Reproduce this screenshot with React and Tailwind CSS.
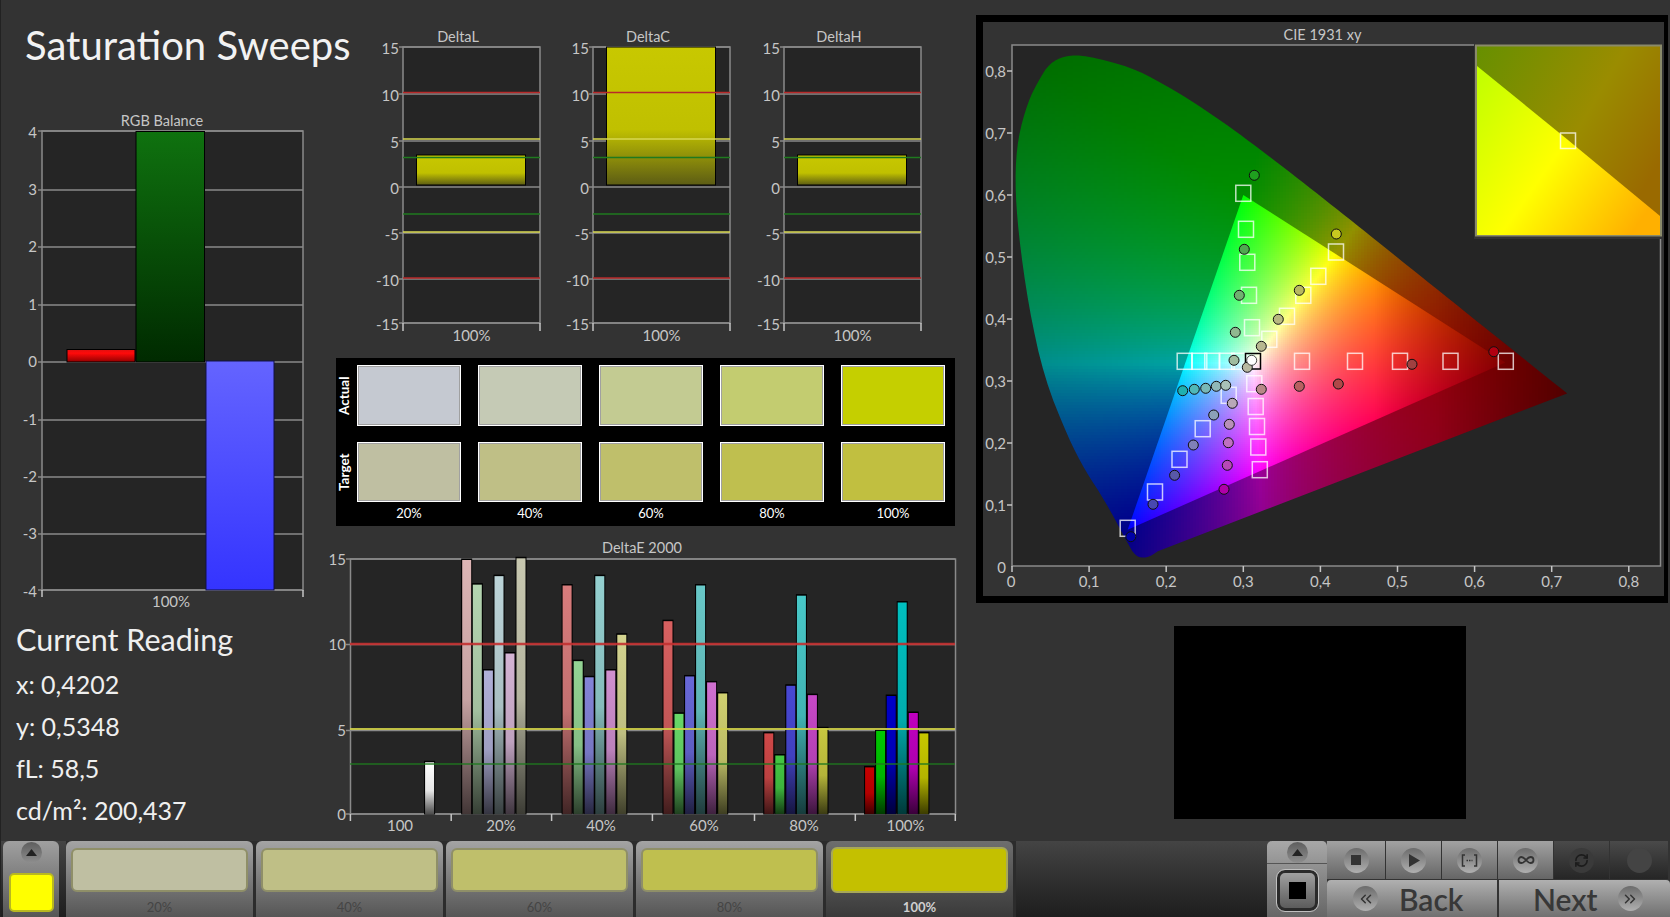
import { ChevronsLeft, ChevronsRight, Infinity as InfinityIcon, RefreshCw } from "lucide-react";

const GRID = "#8a8a8a";

// CIE helpers: page pixels <-> xy
const toX = (v) => 1011 + 771 * v;
const toY = (v) => 567 - 620 * v;

function smooth(list, rounds) {
  let out = list;
  for (let n = 0; n < rounds; n++) {
    const next = [out[0]];
    for (let i = 0; i < out.length - 1; i++) {
      const [ax, ay] = out[i];
      const [bx, by] = out[i + 1];
      next.push([ax * 0.75 + bx * 0.25, ay * 0.75 + by * 0.25], [ax * 0.25 + bx * 0.75, ay * 0.25 + by * 0.75]);
    }
    next.push(out[out.length - 1]);
    out = next;
  }
  return out;
}

const LOCUS = smooth(
  [
    [0.19, 0.026], [0.175, 0.014], [0.16, 0.017], [0.149, 0.041], [0.12, 0.108], [0.095, 0.155], [0.073, 0.208],
    [0.0418, 0.305], [0.0215, 0.42], [0.0082, 0.5384], [0.0037, 0.623], [0.0073, 0.691], [0.0208, 0.751],
    [0.0346, 0.785], [0.0484, 0.812], [0.0691, 0.825], [0.0967, 0.825], [0.1547, 0.8059],
    [0.1929, 0.7816], [0.2296, 0.7543], [0.2658, 0.7243], [0.3016, 0.6923], [0.3373, 0.6589], [0.3731, 0.6245],
    [0.4087, 0.5896], [0.4441, 0.5547], [0.4788, 0.5202], [0.5125, 0.4866], [0.5448, 0.4544], [0.5752, 0.4242],
    [0.6029, 0.3965], [0.627, 0.3725], [0.6658, 0.334], [0.6915, 0.3083], [0.72, 0.28],
  ],
  2
);
const GAMUT = [[0.64, 0.33], [0.3, 0.6], [0.15, 0.06]];

const toPoints = (list) => list.map(([x, y]) => `${toX(x)},${toY(y)}`).join(" ");

function inside(poly, x, y) {
  let hit = false;
  for (let i = 0, j = poly.length - 1; i < poly.length; j = i++) {
    const [xi, yi] = poly[i];
    const [xj, yj] = poly[j];
    if (yi > y !== yj > y && x < ((xj - xi) * (y - yi)) / (yj - yi) + xi) hit = !hit;
  }
  return hit;
}

function xyColor(x, y, dim) {
  const X = x / y;
  const Z = (1 - x - y) / y;
  let r = Math.max(0, 3.2406 * X - 1.5372 - 0.4986 * Z);
  let g = Math.max(0, -0.9689 * X + 1.8758 + 0.0415 * Z);
  let b = Math.max(0, 0.0557 * X - 0.204 + 1.057 * Z);
  const m = Math.max(r, g, b);
  const gamma = dim ? 1 : 1 / 1.15;
  r = Math.pow(r / m, gamma);
  g = Math.pow(g / m, gamma);
  b = Math.pow(b / m, gamma);
  let f = 1 - 0.5 * Math.min(1, Math.max(0, (x - 0.47) / 0.17));
  if (dim) {
    const d = Math.hypot(x - 0.3127, y - 0.329);
    f = (0.68 - 0.45 * d) * (1 - 0.35 * Math.min(1, Math.max(0, (x - 0.55) / 0.17)));
  }
  return `rgb(${Math.round(r * f * 255)},${Math.round(g * f * 255)},${Math.round(b * f * 255)})`;
}

function buildCells(poly, step, dim) {
  const cells = [];
  for (let py = 54; py < 566; py += step) {
    for (let px = 1012; px < 1572; px += step) {
      const corners = [[px, py], [px + step, py], [px, py + step], [px + step, py + step]].map(([a, b]) => [
        (a - 1011) / 771,
        (567 - b) / 620,
      ]);
      const hits = corners.filter(([a, b]) => inside(poly, a, b)).length;
      if (!hits) continue;
      if (dim && corners.every(([a, b]) => inside(GAMUT, a, b))) continue;
      const cx = (px + step / 2 - 1011) / 771;
      const cy = (567 - py - step / 2) / 620;
      cells.push([px, py, xyColor(cx, Math.max(cy, 0.005), dim)]);
    }
  }
  return cells;
}

const dimCells = buildCells(LOCUS, 3, true);
const brightCells = buildCells(GAMUT, 2, false);

const SQUARES = [
  [1242.3, 193.3], [1245, 229.3], [1246.3, 262.3], [1248, 295.3], [1251, 327.7], [1268.3, 339.3], [1286, 316.3],
  [1302.3, 295.3], [1317.3, 276.3], [1335, 252], [1183.7, 361.3], [1198.3, 361.3], [1211.3, 361.3], [1225.7, 361.3],
  [1238.3, 361.3], [1301, 361.3], [1354, 361.3], [1399, 361.3], [1449.5, 361.3], [1504.8, 361.3], [1253.3, 383.7],
  [1227.7, 395.3], [1254.7, 406.5], [1256, 426.5], [1257.3, 447], [1258.8, 469.7], [1201.7, 428.7], [1178.5, 459.3],
  [1154, 492], [1126.7, 528.3],
];

const DOTS = [
  [1253.3, 175.3, "#1fa01f"], [1335.3, 234, "#c8c820"], [1243.3, 249.3, "#50a850"], [1298.3, 290.3, "#b8b860"],
  [1238.3, 295.3, "#70b070"], [1277.3, 319.3, "#b8b880"], [1234.3, 332.3, "#90b890"], [1260.3, 346.3, "#b8b890"],
  [1233, 360.3, "#a0bca0"], [1246.3, 367.3, "#b8b8a0"], [1181.7, 390.7, "#20b0b0"], [1193.3, 389.3, "#50b8b8"],
  [1204.7, 388.3, "#78b8b8"], [1215.3, 386.3, "#90b8b8"], [1224.7, 385.3, "#a8c0b8"], [1260.3, 389.3, "#b88888"],
  [1298.3, 386.3, "#b86060"], [1337.3, 384, "#b04848"], [1231.3, 403.3, "#b8a8b8"], [1212.7, 415, "#8ca0b8"],
  [1228.3, 424.3, "#b890b8"], [1192.3, 445, "#8080b8"], [1227.3, 442.7, "#c070c0"], [1173.6, 475.3, "#5858a8"],
  [1226.3, 465.3, "#b848b8"], [1152, 504.3, "#4848b0"], [1223, 489.3, "#b000a8"], [1129.8, 536.7, "#0000a8"],
  [1411, 364.3, "#a04040"], [1492.8, 351.7, "#b00010"],
];

const DELTA_E = [
  { x: [429.6], v: [3.1], c: ["#ffffff"] },
  {
    x: [466.7, 477.3, 488.4, 499, 510, 521],
    v: [15, 13.55, 8.5, 14.05, 9.5, 15.1],
    c: ["#dcb4b4", "#b4d4b0", "#b0b0d8", "#bcd4d8", "#d4b4d4", "#c8c8b0"],
  },
  {
    x: [567.1, 578.2, 589.2, 599.8, 610.8, 621.8],
    v: [13.5, 9.05, 8.1, 14.05, 8.5, 10.6],
    c: ["#d87c7c", "#94d494", "#8484d8", "#94d0d0", "#d090d0", "#d4d490"],
  },
  {
    x: [668, 679, 689.6, 700.6, 711.6, 722.7],
    v: [11.4, 5.95, 8.15, 13.5, 7.8, 7.15],
    c: ["#d86060", "#68d868", "#6868d8", "#68c8c8", "#d070d0", "#d0d070"],
  },
  {
    x: [768.8, 779.8, 790.8, 801.4, 812.4, 823],
    v: [4.8, 3.5, 7.6, 12.9, 7.05, 5.1],
    c: ["#d04848", "#44c844", "#4848d4", "#48c8c8", "#c848c8", "#c8c840"],
  },
  {
    x: [869.6, 880.6, 891.2, 902.2, 913.3, 923.9],
    v: [2.8, 4.95, 7, 12.5, 6, 4.8],
    c: ["#c80000", "#00c800", "#0000c8", "#00c0c0", "#c000c0", "#c8c800"],
  },
];

const SWATCH_ACTUAL = ["#c5c9d1", "#c5cab5", "#c3cb92", "#c3cc70", "#c5cf00"];
const SWATCH_TARGET = ["#bfbfa2", "#bfbf86", "#bfbf6b", "#bfbf4f", "#c1bf40"];
const PERCENTS = ["20%", "40%", "60%", "80%", "100%"];
const STRIP = ["#bfbfa2", "#bfbf86", "#bfbf6b", "#bfbf4f"];

function AxisLabel({ x, y, children, anchor = "end" }) {
  return (
    <text x={x} y={y} textAnchor={anchor} dominantBaseline="middle" className="text-[15px] fill-[#c6c6c6]">
      {children}
    </text>
  );
}

function RgbChart() {
  const rows = [
    [131, "4", 3], [190, "3", 1], [247, "2", 1], [305, "1", 1], [362, "0", 1], [420, "-1", 1], [477, "-2", 1], [534, "-3", 1], [590, "-4", 3],
  ];
  return (
    <svg width="336" height="500" viewBox="0 112 336 500" className="block">
      <defs>
        <linearGradient id="rgbRed" x1="0" y1="0" x2="0" y2="1">
          <stop offset="0" stopColor="#e01010" />
          <stop offset="0.3" stopColor="#ff0a0a" />
          <stop offset="1" stopColor="#900000" />
        </linearGradient>
        <linearGradient id="rgbGreen" x1="0" y1="0" x2="0" y2="1">
          <stop offset="0" stopColor="#0f720f" />
          <stop offset="1" stopColor="#002a00" />
        </linearGradient>
        <linearGradient id="rgbBlue" x1="0" y1="0" x2="0" y2="1">
          <stop offset="0" stopColor="#6464ff" />
          <stop offset="1" stopColor="#3434ff" />
        </linearGradient>
      </defs>
      <text x="161" y="122" textAnchor="middle" dominantBaseline="middle" className="text-[14.5px] fill-[#c6c6c6]">
        RGB Balance
      </text>
      <rect x="41" y="131" width="261" height="459" fill="#252525" stroke={GRID} strokeWidth="1.5" />
      {rows.map(([y, label, nudge]) => (
        <g key={label}>
          <line x1="37" x2="302" y1={y} y2={y} stroke={GRID} strokeWidth="1.5" />
          <AxisLabel x="36" y={y + nudge}>{label}</AxisLabel>
        </g>
      ))}
      <line x1="41" x2="41" y1="590" y2="597" stroke="#c6c6c6" strokeWidth="1.5" />
      <line x1="302" x2="302" y1="590" y2="597" stroke="#c6c6c6" strokeWidth="1.5" />
      <rect x="66" y="349.5" width="68" height="12.5" fill="url(#rgbRed)" stroke="#000" />
      <rect x="135" y="131.5" width="68.5" height="230.5" fill="url(#rgbGreen)" stroke="#000" />
      <rect x="205" y="361" width="68" height="229" fill="url(#rgbBlue)" stroke="#10104a" />
      <AxisLabel x="170" y="603" anchor="middle">100%</AxisLabel>
    </svg>
  );
}

function DeltaChart({ id, title, barTop, width }) {
  const rows = [[47, "15"], [94, "10"], [141, "5"], [187, "0"], [233, "-5"], [279, "-10"], [323, "-15"]];
  return (
    <svg width={width} height="330" viewBox={`0 22 ${width} 330`} className="block shrink-0">
      <defs>
        <linearGradient id={id} x1="0" y1="0" x2="0" y2="1">
          <stop offset="0" stopColor="#c8c800" />
          <stop offset="0.6" stopColor="#c0c000" />
          <stop offset="1" stopColor="#5c5c14" />
        </linearGradient>
      </defs>
      <text x="95" y="38" textAnchor="middle" dominantBaseline="middle" className="text-[14.5px] fill-[#c6c6c6]">
        {title}
      </text>
      <rect x="40" y="47" width="137" height="276" fill="#252525" stroke={GRID} strokeWidth="1.5" />
      {rows.map(([y, label]) => (
        <g key={label}>
          <line x1="36" x2="177" y1={y} y2={y} stroke={GRID} strokeWidth="1.5" />
          <AxisLabel x="36" y={y + 3}>{label}</AxisLabel>
        </g>
      ))}
      <line x1="40" x2="40" y1="323" y2="331" stroke="#c6c6c6" strokeWidth="1.5" />
      <line x1="177" x2="177" y1="323" y2="331" stroke="#c6c6c6" strokeWidth="1.5" />
      <rect x="53.5" y={barTop} width="109" height={185 - barTop} fill={`url(#${id})`} stroke="#000" />
      <line x1="40" x2="177" y1="92.5" y2="92.5" stroke="#b82a2a" strokeWidth="1.5" />
      <line x1="40" x2="177" y1="139" y2="139" stroke="#d8d850" strokeWidth="1.5" />
      <line x1="40" x2="177" y1="157.5" y2="157.5" stroke="#1f7a1f" strokeWidth="1.5" />
      <line x1="40" x2="177" y1="214" y2="214" stroke="#1f7a1f" strokeWidth="1.5" />
      <line x1="40" x2="177" y1="232" y2="232" stroke="#d8d850" strokeWidth="1.5" />
      <line x1="40" x2="177" y1="278" y2="278" stroke="#b82a2a" strokeWidth="1.5" />
      <AxisLabel x="108.5" y="337" anchor="middle">100%</AxisLabel>
    </svg>
  );
}

function Swatch({ color }) {
  return (
    <div className="w-[104px] h-full border border-white">
      <div className="w-full h-full border border-[#a0a0a0]" style={{ backgroundColor: color }} />
    </div>
  );
}

function SwatchPanel() {
  return (
    <div className="w-[619px] h-[168px] bg-black flex flex-col pt-[7px]">
      <div className="flex h-[61px]">
        <span className="w-[16px] mr-[5px] [writing-mode:vertical-rl] rotate-180 text-center font-bold text-[13.5px] leading-[16px] text-white">Actual</span>
        <div className="flex gap-[17px]">
          {SWATCH_ACTUAL.map((c) => <Swatch key={c} color={c} />)}
        </div>
      </div>
      <div className="flex h-[60px] mt-[16px]">
        <span className="w-[16px] mr-[5px] [writing-mode:vertical-rl] rotate-180 text-center font-bold text-[13.5px] leading-[16px] text-white">Target</span>
        <div className="flex gap-[17px]">
          {SWATCH_TARGET.map((c) => <Swatch key={c} color={c} />)}
        </div>
      </div>
      <div className="flex gap-[17px] pl-[21px] mt-[3px]">
        {PERCENTS.map((p) => (
          <span key={p} className="w-[104px] text-center text-[13px] leading-[16px] text-white">{p}</span>
        ))}
      </div>
    </div>
  );
}

function DeltaEChart() {
  const ticks = [350.4, 451.2, 551.6, 652.4, 754.5, 855.3, 955.3];
  const names = [[400, "100"], [501, "20%"], [601, "40%"], [704, "60%"], [804, "80%"], [905.5, "100%"]];
  const rows = [[559, "15"], [644.5, "10"], [730.5, "5"], [814, "0"]];
  return (
    <svg width="639" height="306" viewBox="336 535 639 306" className="block overflow-visible">
      <defs>
        {DELTA_E.flatMap((group, g) =>
          group.c.map((color, i) => (
            <linearGradient key={`${g}-${i}`} id={`de${g}-${i}`} x1="0" y1="0" x2="0" y2="1">
              <stop offset="0" stopColor={color} />
              <stop offset="0.55" stopColor={color} stopOpacity="0.9" />
              <stop offset="1" stopColor={color} stopOpacity="0.3" />
            </linearGradient>
          ))
        )}
      </defs>
      <text x="642" y="549" textAnchor="middle" dominantBaseline="middle" className="text-[14.5px] fill-[#c6c6c6]">
        DeltaE 2000
      </text>
      <rect x="350.5" y="559" width="605" height="255" fill="#252525" stroke={GRID} strokeWidth="1.5" />
      {rows.map(([y, label]) => (
        <g key={label}>
          <line x1="346" x2="955" y1={y} y2={y} stroke={GRID} strokeWidth="1.5" />
          <AxisLabel x="346" y={y + 2}>{label}</AxisLabel>
        </g>
      ))}
      {ticks.map((x) => (
        <line key={x} x1={x} x2={x} y1="814" y2="821" stroke="#c6c6c6" strokeWidth="1.5" />
      ))}
      {DELTA_E.flatMap((group, g) =>
        group.x.map((x, i) => (
          <g key={`${g}-${i}`}>
            <rect x={x - 5} y={814 - group.v[i] * 17} width="10" height={group.v[i] * 17} fill="#000" stroke="#000" />
            <rect x={x - 4.5} y={814 - group.v[i] * 17 + 1} width="9" height={group.v[i] * 17 - 1} fill={`url(#de${g}-${i})`} />
          </g>
        ))
      )}
      <line x1="350" x2="955" y1="644" y2="644" stroke="#c43030" strokeWidth="2.5" opacity="0.9" />
      <line x1="350" x2="955" y1="729" y2="729" stroke="#d0d048" strokeWidth="2" opacity="0.9" />
      <line x1="350" x2="955" y1="764" y2="764" stroke="#1f7a1f" strokeWidth="1.5" opacity="0.9" />
      {names.map(([x, label]) => (
        <AxisLabel key={label} x={x} y="827" anchor="middle">{label}</AxisLabel>
      ))}
    </svg>
  );
}

function CieChart() {
  const yLabels = [0.8, 0.7, 0.6, 0.5, 0.4, 0.3, 0.2, 0.1];
  const xLabels = [0.1, 0.2, 0.3, 0.4, 0.5, 0.6, 0.7, 0.8];
  return (
    <svg width="681" height="574" viewBox="982 22 681 574" className="block">
      <defs>
        <clipPath id="locusClip">
          <polygon points={toPoints(LOCUS)} />
        </clipPath>
        <clipPath id="gamutClip">
          <polygon points={toPoints(GAMUT)} />
        </clipPath>
        <linearGradient id="insetDim" x1="0" y1="0" x2="1" y2="0.6">
          <stop offset="0" stopColor="#669000" />
          <stop offset="0.6" stopColor="#9a8c00" />
          <stop offset="1" stopColor="#9a6a00" />
        </linearGradient>
        <linearGradient id="insetBright" x1="0" y1="0.1" x2="1" y2="0.75">
          <stop offset="0" stopColor="#c4ff00" />
          <stop offset="0.5" stopColor="#ffff00" />
          <stop offset="1" stopColor="#ffb000" />
        </linearGradient>
      </defs>
      <text x="1321.5" y="36" textAnchor="middle" dominantBaseline="middle" className="text-[14.5px] fill-[#c6c6c6]">
        CIE 1931 xy
      </text>
      <rect x="1011" y="45" width="648.5" height="521" fill="#252525" stroke={GRID} strokeWidth="1.5" />
      {yLabels.map((v) => (
        <g key={v}>
          <line x1="1006" x2="1011" y1={toY(v)} y2={toY(v)} stroke="#c6c6c6" strokeWidth="1.5" />
          <AxisLabel x="1005" y={toY(v) + 2}>{String(v).replace(".", ",")}</AxisLabel>
        </g>
      ))}
      <AxisLabel x="1005" y="569">0</AxisLabel>
      <line x1="1011" x2="1011" y1="566" y2="572" stroke="#c6c6c6" strokeWidth="1.5" />
      <AxisLabel x="1010" y="583" anchor="middle">0</AxisLabel>
      {xLabels.map((v) => (
        <g key={v}>
          <line x1={toX(v)} x2={toX(v)} y1="566" y2="572" stroke="#c6c6c6" strokeWidth="1.5" />
          <AxisLabel x={toX(v)} y="583" anchor="middle">{String(v).replace(".", ",")}</AxisLabel>
        </g>
      ))}
      <g clipPath="url(#locusClip)" shapeRendering="crispEdges">
        {dimCells.map(([x, y, c]) => (
          <rect key={`${x}-${y}`} x={x} y={y} width="3" height="3" fill={c} />
        ))}
      </g>
      <g clipPath="url(#gamutClip)" shapeRendering="crispEdges">
        {brightCells.map(([x, y, c]) => (
          <rect key={`${x}-${y}`} x={x} y={y} width="2" height="2" fill={c} />
        ))}
      </g>
      {SQUARES.map(([x, y]) => (
        <rect key={`${x}-${y}`} x={x - 7.5} y={y - 8} width="15" height="16" fill="none" stroke="#fff" strokeOpacity="0.75" strokeWidth="1.5" />
      ))}
      <rect x="1244.5" y="353.5" width="15" height="15.5" fill="none" stroke="#000" strokeWidth="1.5" />
      {DOTS.map(([x, y, c]) => (
        <circle key={`${x}-${y}`} cx={x} cy={y} r="5" fill={c} stroke="#101010" strokeWidth="1" />
      ))}
      <circle cx="1250.7" cy="360.3" r="5" fill="#fff" stroke="#101010" strokeWidth="0.75" />
      <rect x="1473" y="43" width="190" height="196" fill="#333" />
      <rect x="1475" y="45.5" width="185" height="190" fill="url(#insetDim)" stroke="#8a8a6a" strokeWidth="2" />
      <polygon points="1476,66 1567,140 1659,216 1659,235 1476,235" fill="url(#insetBright)" />
      <rect x="1559.5" y="133" width="15" height="15.5" fill="none" stroke="#fff" strokeOpacity="0.75" strokeWidth="1.5" />
    </svg>
  );
}

function UpButton() {
  return (
    <span className="w-[21px] h-[21px] rounded-full bg-linear-to-b from-[#5e5e5e] to-[#8e8e8e] flex items-center justify-center">
      <svg width="11" height="7" viewBox="0 0 11 7"><path d="M5.5 0L11 7H0z" fill="#222" /></svg>
    </span>
  );
}

function StripButton({ color, label, active }) {
  return (
    <div
      className={
        active
          ? "w-[187px] h-full rounded-t-[6px] bg-linear-to-b from-[#6e6e6e] via-[#545454] to-[#3a3a3a] flex flex-col items-center pt-[6px]"
          : "w-[187px] h-full rounded-t-[6px] bg-linear-to-b from-[#a4a4a4] via-[#7c7c7c] to-[#565656] flex flex-col items-center pt-[7px]"
      }
    >
      <div
        className={
          active
            ? "w-[177px] h-[46px] rounded-[6px] border-2 border-[#a8a858]"
            : "w-[177px] h-[45px] rounded-[6px] border-2 border-[#8f8f68]"
        }
        style={{ backgroundColor: color }}
      />
      <span className={active ? "mt-[5px] text-[13px] font-bold text-[#d0d0d0]" : "mt-[6px] text-[13px] text-[#454545]"}>
        {label}
      </span>
    </div>
  );
}

function RoundIcon({ children }) {
  return (
    <span className="w-[25px] h-[25px] rounded-full bg-linear-to-b from-[#6c6c6c] to-[#b0b0b0] flex items-center justify-center text-[#333]">
      {children}
    </span>
  );
}

function ToolCell({ children, width, dark }) {
  return (
    <div
      className={
        dark
          ? "h-full flex items-center justify-center bg-linear-to-b from-[#4a4a4a] to-[#262626]"
          : "h-full flex items-center justify-center bg-linear-to-b from-[#a2a2a2] to-[#666666]"
      }
      style={{ width }}
    >
      {children}
    </div>
  );
}

function Toolbar() {
  return (
    <div className="h-[76px] flex bg-linear-to-b from-[#444444] to-[#1e1e1e]">
      <div className="ml-[2px] w-[56px] h-full rounded-t-[6px] bg-linear-to-b from-[#a0a0a0] via-[#7c7c7c] to-[#565656] flex flex-col items-center pt-[1px]">
        <UpButton />
        <div className="mt-[10px] w-[45px] h-[39px] rounded-[5px] bg-[#ffff00] border-2 border-[#b8b820]" />
      </div>
      <div className="ml-[7px] flex gap-[3px] bg-[#2c2c2c] pr-[3px]">
        {STRIP.map((c, i) => <StripButton key={c} color={c} label={PERCENTS[i]} />)}
        <StripButton color="#c4c000" label="100%" active />
      </div>

      <div className="ml-auto w-[60px] h-full rounded-t-[5px] flex flex-col bg-linear-to-b from-[#a8a8a8] to-[#666666]">
        <div className="h-[23px] flex items-center justify-center border-b border-[#555]"><UpButton /></div>
        <div className="flex-1 flex items-center justify-center">
          <div className="w-[41px] h-[41px] rounded-[8px] border-[3px] border-[#2a2a2a] outline outline-[#c0c0c0] flex items-center justify-center bg-linear-to-b from-[#a0a0a0] to-[#5c5c5c]">
            <span className="w-[17px] h-[17px] bg-black" />
          </div>
        </div>
      </div>

      <div className="w-[343px] flex flex-col">
        <div className="h-[38px] flex gap-[1px] bg-[#333]">
          <ToolCell width="58px"><RoundIcon><span className="w-[10px] h-[10px] bg-[#333]" /></RoundIcon></ToolCell>
          <ToolCell width="55px">
            <RoundIcon><svg width="12" height="13" viewBox="0 0 12 13"><path d="M1 0l11 6.5L1 13z" fill="#333" /></svg></RoundIcon>
          </ToolCell>
          <ToolCell width="55px">
            <RoundIcon>
              <svg width="17" height="13" viewBox="0 0 17 13" fill="none" stroke="#333" strokeWidth="1.5">
                <path d="M4 1H1.5v11H4M13 1h2.5v11H13" />
                <path d="M5.5 6.5h6" strokeDasharray="1.5 1" />
              </svg>
            </RoundIcon>
          </ToolCell>
          <ToolCell width="55px"><RoundIcon><InfinityIcon size={18} strokeWidth={2.4} /></RoundIcon></ToolCell>
          <ToolCell width="55px" dark>
            <span className="w-[25px] h-[25px] rounded-full bg-[#3a3a3a] flex items-center justify-center text-[#1c1c1c]">
              <RefreshCw size={15} strokeWidth={2.6} />
            </span>
          </ToolCell>
          <ToolCell width="58px" dark><span className="w-[25px] h-[25px] rounded-full bg-[#444]" /></ToolCell>
        </div>
        <div className="flex-1 flex gap-[2px] bg-[#333] pt-[1px]">
          <div className="w-[170px] flex items-center rounded-tl-[4px] bg-linear-to-b from-[#b0b0b0] to-[#707070] pl-[26px] gap-[21px]">
            <RoundIcon><ChevronsLeft size={18} strokeWidth={2} /></RoundIcon>
            <span className="text-[30px] leading-[32px] font-semibold text-[#383838]">Back</span>
          </div>
          <div className="flex-1 flex items-center rounded-tr-[4px] bg-linear-to-b from-[#b0b0b0] to-[#707070] pl-[34px] gap-[20px]">
            <span className="text-[30px] leading-[32px] font-semibold text-[#383838]">Next</span>
            <RoundIcon><ChevronsRight size={18} strokeWidth={2} /></RoundIcon>
          </div>
        </div>
      </div>
    </div>
  );
}

export default function App() {
  return (
    <div className="w-[1670px] h-[917px] overflow-hidden flex flex-col bg-[#333333] border-l border-[#222] font-['Lato',sans-serif]">
      <div className="h-[841px] flex">
        <div className="w-[335px] shrink-0 flex flex-col">
          <h1 className="h-[112px] pt-[20px] pl-[24px] text-[40px] leading-[50px] font-normal whitespace-nowrap text-[#f2f2f2]">Saturation Sweeps</h1>
          <RgbChart />
          <div className="pl-[15px] pt-[9px] flex flex-col text-[#efefef]">
            <h2 className="text-[30.5px] leading-[36px] font-normal">Current Reading</h2>
            <p className="mt-[6px] text-[25px] leading-[42px]">x: 0,4202</p>
            <p className="text-[25px] leading-[42px]">y: 0,5348</p>
            <p className="text-[25px] leading-[42px]">fL: 58,5</p>
            <p className="text-[25px] leading-[42px]">cd/m²: 200,437</p>
          </div>
        </div>

        <div className="w-[639px] shrink-0 flex flex-col pt-[22px]">
          <div className="flex pl-[27px] h-[336px]">
            <DeltaChart id="barL" title="DeltaL" barTop={155} width={190} />
            <DeltaChart id="barC" title="DeltaC" barTop={47} width={191} />
            <DeltaChart id="barH" title="DeltaH" barTop={155} width={191} />
          </div>
          <SwatchPanel />
          <div className="mt-[9px]">
            <DeltaEChart />
          </div>
        </div>

        <div className="flex-1 flex flex-col pt-[15px] pl-[1px]">
          <div className="w-[692px] h-[588px] bg-black pt-[7px] pl-[7px]">
            <div className="w-[681px] h-[574px] bg-[#333333]">
              <CieChart />
            </div>
          </div>
          <div className="mt-[23px] ml-[198px] w-[292px] h-[193px] bg-black" />
        </div>
      </div>
      <Toolbar />
    </div>
  );
}
